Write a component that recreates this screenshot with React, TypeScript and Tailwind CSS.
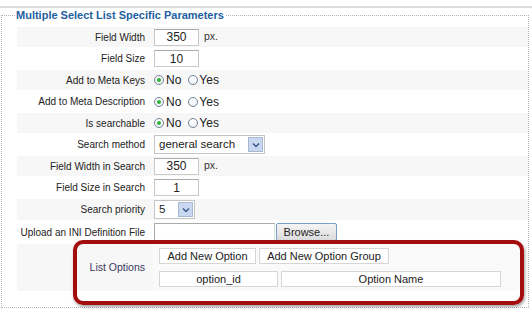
import React from 'react';

const font = { fontFamily: '"Liberation Sans", Arial, sans-serif' };

function Radio({ checked }: { checked?: boolean }) {
  return (
    <span className="inline-flex h-[10px] w-[10px] items-center justify-center rounded-full border border-[#6f8396] bg-gradient-to-b from-white to-[#eef2f6]">
      {checked && <span className="h-[4px] w-[4px] rounded-full bg-[#2fb23a]" />}
    </span>
  );
}

function YesNo() {
  return (
    <div className="flex items-center text-[12px] text-[#222]">
      <Radio checked />
      <span className="ml-[2px]">No</span>
      <span className="ml-[7px] flex">
        <Radio />
      </span>
      <span className="ml-[1px]">Yes</span>
    </div>
  );
}

function TextBox({ value, px }: { value: string; px?: boolean }) {
  return (
    <div className="flex items-center">
      <div className="flex h-[17px] w-[45px] items-center justify-center border border-[#c9c9c9] border-t-[#a9a9a9] bg-white text-[12px] text-[#222]">
        {value}
      </div>
      {px && <span className="ml-[5px] text-[10.5px] text-[#333]">px.</span>}
    </div>
  );
}

function Arrow() {
  return (
    <span className="flex h-[15px] w-[15px] items-center justify-center border border-[#a7b8d4] bg-[#c9d8f0]">
      <svg width="8" height="6" viewBox="0 0 8 6">
        <path d="M1 1.5 L4 4.5 L7 1.5" fill="none" stroke="#3a5a8a" strokeWidth="1.5" />
      </svg>
    </span>
  );
}

function Select({ value, width }: { value: string; width: number }) {
  return (
    <div
      className="flex h-[19px] items-center justify-between border border-[#c4c4c4] bg-white pl-[4px] pr-[1px] text-[11.5px] text-[#222]"
      style={{ width }}
    >
      <span>{value}</span>
      <Arrow />
    </div>
  );
}

type Row = { label: string; gray: boolean; h: string; field: React.ReactNode };

const rows: Row[] = [
  { label: 'Field Width', gray: true, h: 'h-[20px]', field: <TextBox value="350" px /> },
  { label: 'Field Size', gray: false, h: 'h-[23px]', field: <TextBox value="10" /> },
  { label: 'Add to Meta Keys', gray: true, h: 'h-[20px]', field: <YesNo /> },
  { label: 'Add to Meta Description', gray: false, h: 'h-[23px]', field: <YesNo /> },
  { label: 'Is searchable', gray: true, h: 'h-[20px]', field: <YesNo /> },
  { label: 'Search method', gray: false, h: 'h-[23px]', field: <Select value="general search" width={111} /> },
  { label: 'Field Width in Search', gray: true, h: 'h-[20px]', field: <TextBox value="350" px /> },
  { label: 'Field Size in Search', gray: false, h: 'h-[23px]', field: <TextBox value="1" /> },
  { label: 'Search priority', gray: true, h: 'h-[21px]', field: <Select value="5" width={41} /> },
  {
    label: 'Upload an INI Definition File',
    gray: false,
    h: 'h-[24px]',
    field: (
      <div className="flex items-center">
        <div className="h-[18px] w-[121px] border border-[#aaa] border-r-[#ddd] border-b-[#ddd] bg-white" />
        <button className="ml-[1px] h-[18px] w-[61px] rounded-[2px] border border-[#7b9ec9] bg-gradient-to-b from-[#f4f4f4] to-[#dcdcdc] text-[11px] text-[#222]">
          Browse...
        </button>
      </div>
    ),
  },
];

function OptButton({ children, w }: { children: React.ReactNode; w: string }) {
  return (
    <div className={`flex h-[16px] items-center justify-center border border-[#d6d6d6] bg-white text-[11px] text-[#222] ${w}`}>
      {children}
    </div>
  );
}

export default function App() {
  return (
    <div className="relative h-[309px] w-[532px] overflow-hidden bg-white" style={font}>
      <div className="h-[6px]" />
      <div className="h-[2px] bg-[#dcdcdc]" />
      <fieldset className="ml-[1px] w-[528px] border border-dotted border-[#b5b5b5] pl-[15px] pt-[5px] pb-[16px]">
        <legend className="-ml-[2px] px-[1px] text-[11px] font-bold leading-[14px] text-[#23609f]">
          Multiple Select List Specific Parameters
        </legend>
        {rows.map((r) => (
          <div key={r.label} className={`flex items-center ${r.h} ${r.gray ? 'bg-[#f7f7f7]' : 'bg-white'}`}>
            <div className="w-[131px] pr-[3px] text-right text-[10px] text-[#222]">{r.label}</div>
            <div className="pl-[6px]">{r.field}</div>
          </div>
        ))}
        <div className="flex h-[47px] items-center bg-[#f7f7f7]">
          <div className="w-[131px] pr-[3px] text-right text-[10.5px] text-[#3b3a62]">List Options</div>
          <div className="ml-[5px] flex h-full flex-1 flex-col justify-center gap-[7px] bg-[#fafafa] pl-[6px]">
            <div className="flex gap-[3px]">
              <OptButton w="w-[97px]">Add New Option</OptButton>
              <OptButton w="w-[130px]">Add New Option Group</OptButton>
            </div>
            <div className="flex gap-[3px]">
              <OptButton w="w-[119px]">option_id</OptButton>
              <OptButton w="w-[220px]">Option Name</OptButton>
            </div>
          </div>
        </div>
      </fieldset>
      <div className="absolute left-[73px] top-[240px] h-[65px] w-[451px] rounded-[10px] border-[4px] border-[#a30d0d] shadow-[1px_2px_3px_rgba(0,0,0,0.35)]" />
    </div>
  );
}
